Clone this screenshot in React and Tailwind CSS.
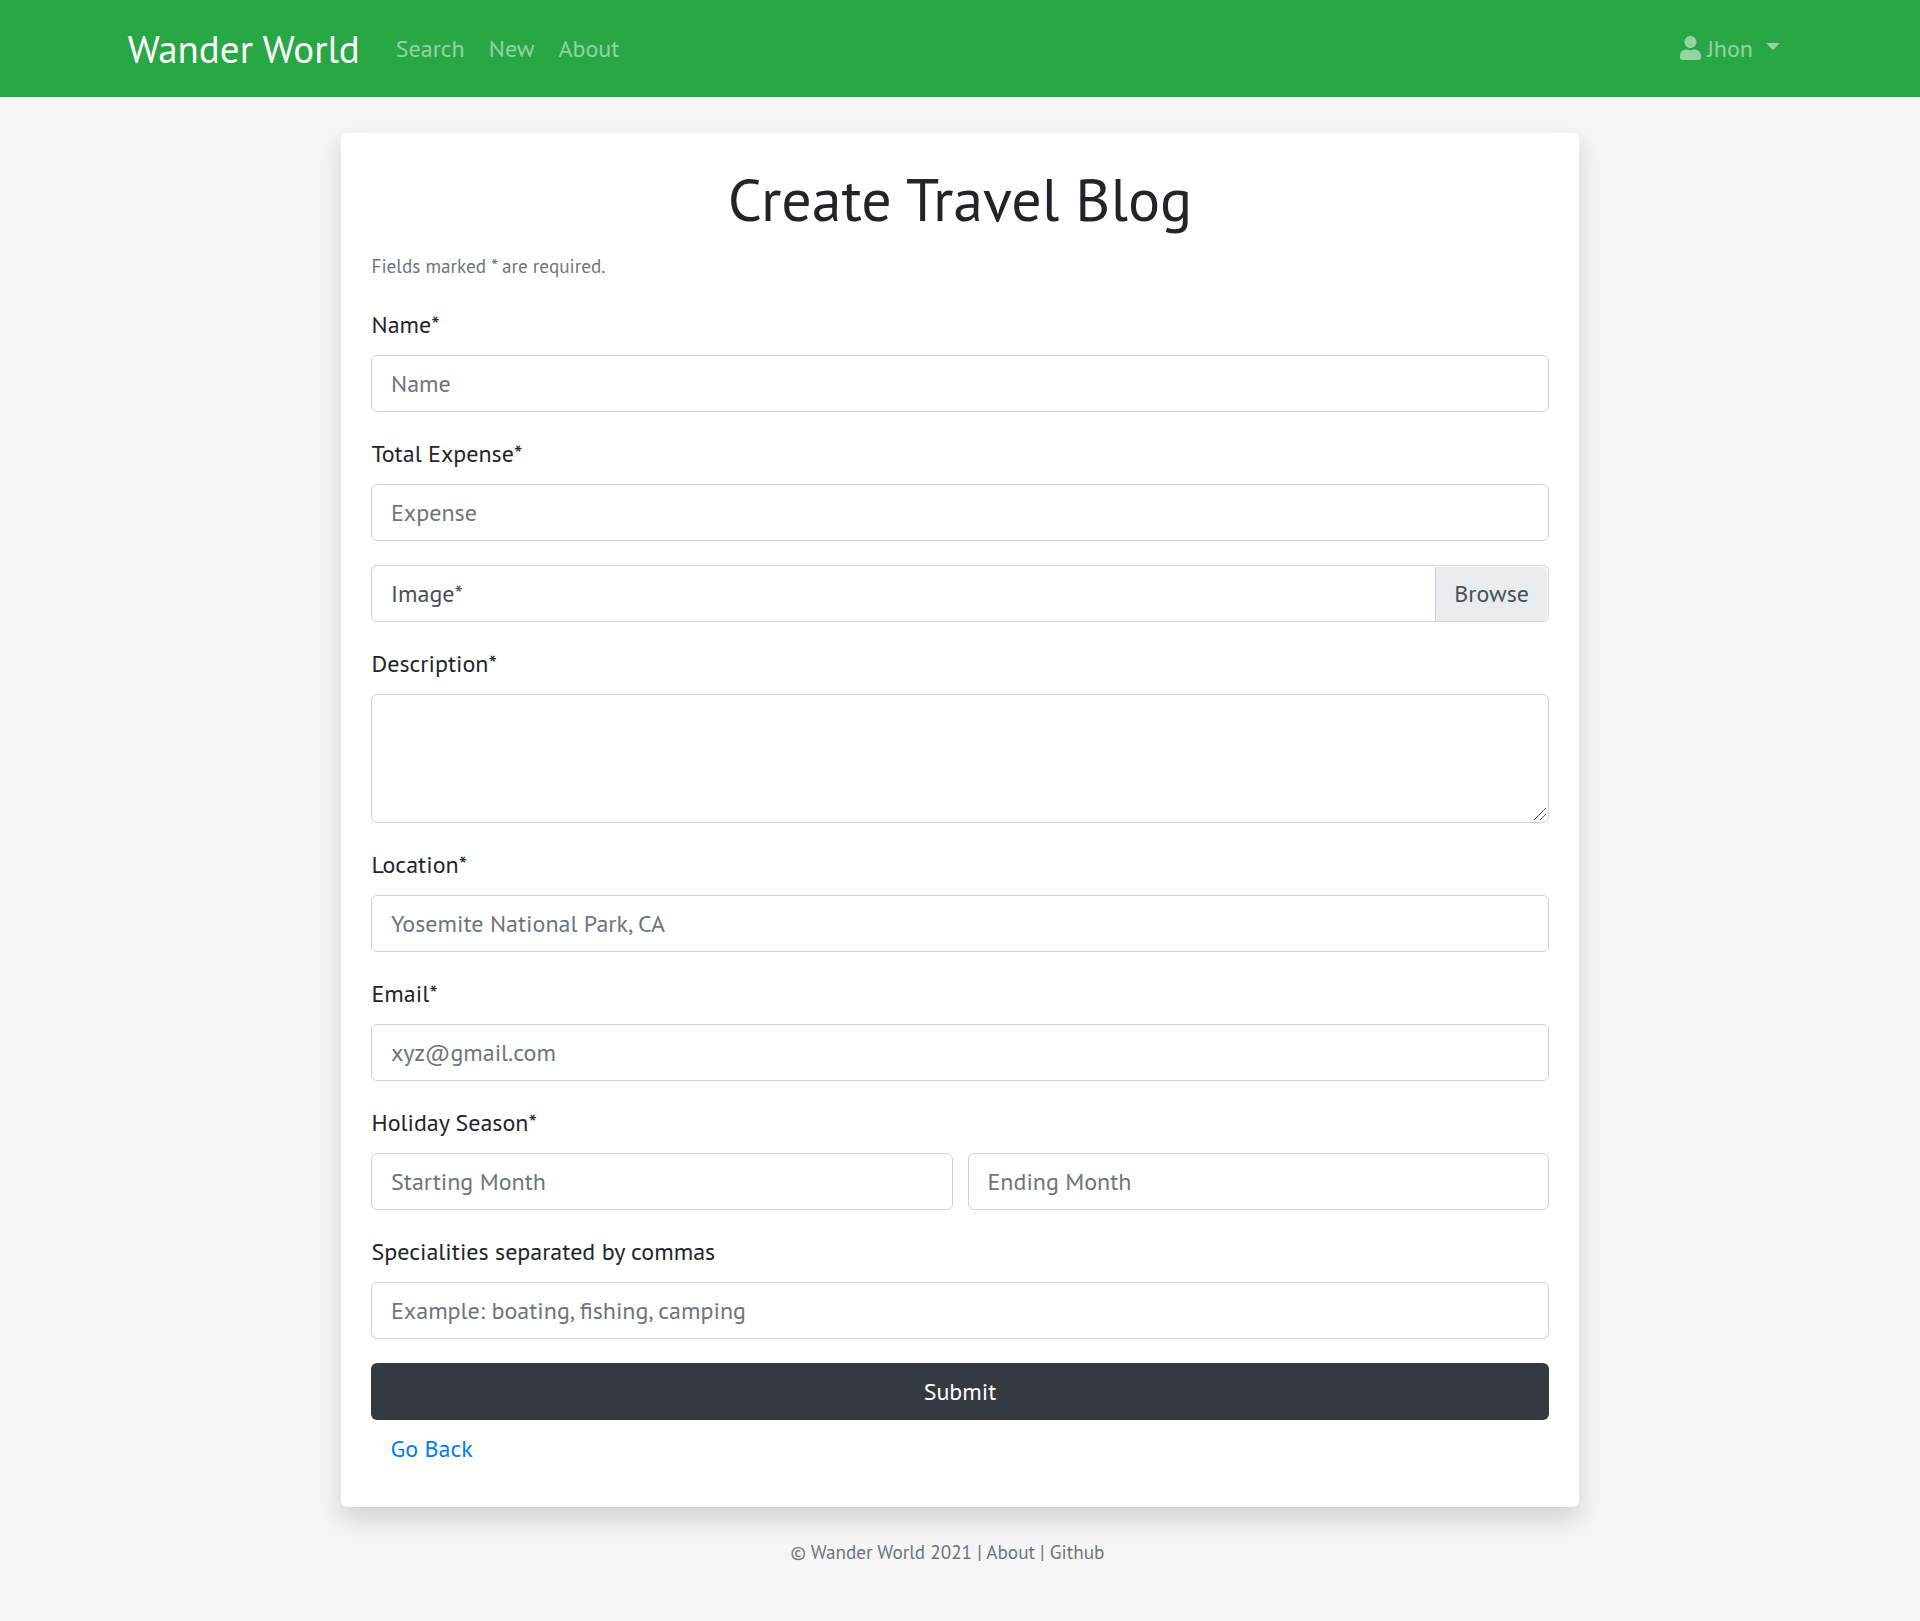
import { FaUser } from "react-icons/fa";

const inputClass =
  "block h-[57px] w-full rounded-[6px] border border-[#ced4da] bg-white px-[19px] text-[24px] leading-[36px] text-[#495057] placeholder:text-[#6c757d] placeholder:opacity-100 outline-none";

function Field({ label, children }) {
  return (
    <div className="mb-6">
      <label className="mb-3 block pl-[0.5px] leading-[36px]">{label}</label>
      {children}
    </div>
  );
}

function Navbar() {
  return (
    <nav className="flex h-[97px] items-center bg-[#28a745] pr-[140px] pl-[127.5px] text-white/50">
      <a className="mr-9 text-[39px] leading-[58px] text-white">Wander World</a>
      <div className="flex gap-6">
        <a>Search</a>
        <a>New</a>
        <a>About</a>
      </div>
      <a className="ml-auto flex items-center">
        <FaUser className="mr-[6px] mb-[2px] h-6 w-[21px]" />
        <span>Jhon</span>
        <span className="mb-1 ml-[13px] border-x-[7px] border-t-[7px] border-x-transparent border-t-white/50" />
      </a>
    </nav>
  );
}

export default function App() {
  return (
    <div className="min-h-[1621px] bg-[#f5f5f5] font-['PT_Sans','Noto_Sans',sans-serif] text-[24px] leading-[36px] text-[#212529]">
      <Navbar />
      <main className="mx-auto mt-9 w-[1238px] rounded-[6px] bg-white p-[30px] shadow-[0_12px_24px_rgba(0,0,0,0.15)]">
        <h1 className="mb-3 text-center text-[60px] leading-[72px]">Create Travel Blog</h1>
        <p className="mb-6 pl-[0.5px] pt-[2px] text-[19.2px] leading-[34px] text-[#6c757d]">Fields marked * are required.</p>
        <form>
          <Field label="Name*">
            <input className={inputClass} placeholder="Name" />
          </Field>
          <Field label="Total Expense*">
            <input className={inputClass} placeholder="Expense" />
          </Field>
          <div className="mb-6 flex h-[57px] justify-between rounded-[6px] border border-[#ced4da] pt-px pr-px text-[#495057]">
            <span className="pl-[19px] leading-[53px]">Image*</span>
            <span className="rounded-r-[6px] border-l border-[#ced4da] bg-[#e9ecef] px-[18px] leading-[53px]">
              Browse
            </span>
          </div>
          <Field label="Description*">
            <div className="relative">
              <textarea className="block h-[129px] w-full resize-none rounded-[6px] border border-[#ced4da] bg-white px-[19px] py-[10px] outline-none" />
              <svg
                className="pointer-events-none absolute right-[3px] bottom-[3px] h-3 w-3 stroke-[#555]"
                viewBox="0 0 12 12"
                fill="none"
              >
                <path d="M0 12L12 0M6 12L12 6" />
              </svg>
            </div>
          </Field>
          <Field label="Location*">
            <input className={inputClass} placeholder="Yosemite National Park, CA" />
          </Field>
          <Field label="Email*">
            <input className={inputClass} placeholder="xyz@gmail.com" />
          </Field>
          <Field label="Holiday Season*">
            <div className="grid grid-cols-2 gap-[15px]">
              <input className={inputClass} placeholder="Starting Month" />
              <input className={inputClass} placeholder="Ending Month" />
            </div>
          </Field>
          <Field label="Specialities separated by commas">
            <input className={inputClass} placeholder="Example: boating, fishing, camping" />
          </Field>
          <button type="button" className="block h-[57px] w-full rounded-[6px] bg-[#343a40] text-white">
            Submit
          </button>
          <a className="block px-[19.5px] py-[10px] leading-[37px] text-[#007bff]">Go Back</a>
        </form>
      </main>
      <footer className="mt-[27px] pr-[25px] text-center text-[19.2px] text-[#6c757d]">
        © Wander World 2021 | About | Github
      </footer>
    </div>
  );
}
